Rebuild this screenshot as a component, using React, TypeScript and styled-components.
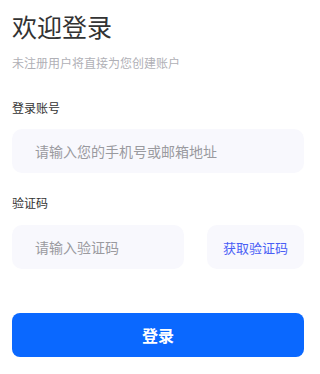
import * as React from 'react'
import styled, { createGlobalStyle } from 'styled-components'

const GlobalStyle = createGlobalStyle`
	html, body {
		margin: 0;
		padding: 0;
		background: #ffffff;
	}
	body {
		font-family: "Noto Sans CJK SC", "Noto Sans", sans-serif;
	}
	* {
		box-sizing: border-box;
	}
`

const Page = styled.div`
	display: flex;
	flex-direction: column;
	padding: 13px 8px 0 12px;
	width: 312px;
`

const Title = styled.h1`
	margin: 0;
	font-size: 25px;
	line-height: 26px;
	font-weight: 400;
	color: #333333;
`

const Subtitle = styled.p`
	margin: 16px 0 0;
	font-size: 12px;
	line-height: 16px;
	color: #b0b0b6;
`

const Label = styled.label<{ $top: number }>`
	display: block;
	margin-top: ${(p) => p.$top}px;
	font-size: 12px;
	line-height: 16px;
	color: #333333;
`

const Field = styled.div`
	display: flex;
	align-items: center;
	height: 44px;
	margin-top: 13px;
	padding: 0 23px;
	background: #f8f8fd;
	border-radius: 10px;
`

const Input = styled.input`
	width: 100%;
	border: none;
	outline: none;
	background: transparent;
	padding: 0;
	font-family: inherit;
	font-size: 14px;
	color: #333333;

	&::placeholder {
		color: #9a9a9f;
	}
`

const CodeRow = styled.div`
	display: flex;
	gap: 23px;
	margin-top: 14px;

	${Field} {
		flex: 1;
		margin-top: 0;
	}
`

const CodeButton = styled.button`
	width: 97px;
	height: 44px;
	border: none;
	border-radius: 10px;
	background: #f8f8fd;
	font-family: inherit;
	font-size: 13px;
	color: #4a5ef5;
	padding: 0;
	cursor: pointer;
`

const SubmitButton = styled.button`
	height: 44px;
	margin-top: 44px;
	border: none;
	border-radius: 8px;
	background: #0a68ff;
	font-family: inherit;
	font-size: 16px;
	font-weight: 700;
	color: #ffffff;
	cursor: pointer;
`

export default function App() {
	const [account, setAccount] = React.useState('')
	const [code, setCode] = React.useState('')

	return (
		<>
			<GlobalStyle />
			<Page>
				<Title>欢迎登录</Title>
				<Subtitle>未注册用户将直接为您创建账户</Subtitle>

				<Label $top={29}>登录账号</Label>
				<Field>
					<Input
						value={account}
						onChange={(e) => setAccount(e.target.value)}
						placeholder="请输入您的手机号或邮箱地址"
					/>
				</Field>

				<Label $top={22}>验证码</Label>
				<CodeRow>
					<Field>
						<Input value={code} onChange={(e) => setCode(e.target.value)} placeholder="请输入验证码" />
					</Field>
					<CodeButton type="button">获取验证码</CodeButton>
				</CodeRow>

				<SubmitButton type="button">登录</SubmitButton>
			</Page>
		</>
	)
}
